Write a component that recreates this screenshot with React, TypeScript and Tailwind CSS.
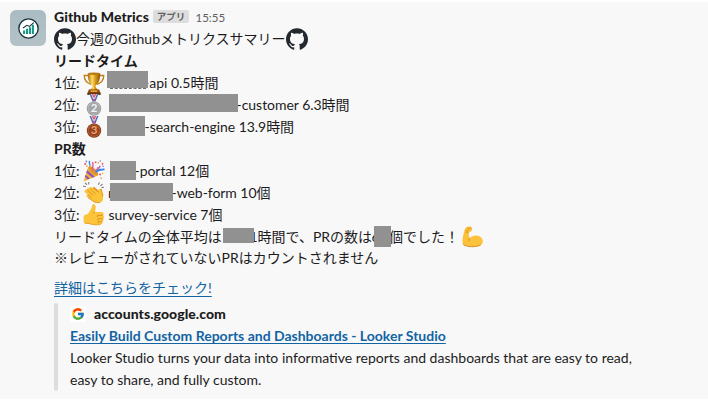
import type { ReactNode } from "react";
import { SiGithub } from "react-icons/si";
import { FcGoogle } from "react-icons/fc";

function Line({ children, h = "h-[22px]" }: { children: ReactNode; h?: string }) {
  return <div className={`flex items-center whitespace-pre ${h}`}>{children}</div>;
}

function Mask({ pos }: { pos: string }) {
  return <span className={`absolute bg-[#919191] ${pos}`} />;
}

function Rank({ n, icon, children }: { n: number; icon: ReactNode; children: ReactNode }) {
  return (
    <div className="relative flex h-[22px] items-center whitespace-pre">
      <span className="w-[29px]">{n}位:</span>
      <span className="h-[22px] w-[25px]">{icon}</span>
      {children}
    </div>
  );
}

function Trophy() {
  return (
    <svg width="22" height="23" viewBox="0 0 23 23" preserveAspectRatio="none" className="block">
      <defs>
        <linearGradient id="gold" x1="0" x2="1">
          <stop offset="0" stopColor="#a8660a" />
          <stop offset=".35" stopColor="#ffdf66" />
          <stop offset=".6" stopColor="#dc9a1c" />
          <stop offset="1" stopColor="#8d5208" />
        </linearGradient>
      </defs>
      <path d="M6 3.500H1.300C1.400 8 3.500 11 8.500 12.200M17 3.500h4.700C21.600 8 19.500 11 14.500 12.200" fill="none" stroke="#c07f14" strokeWidth="1.400" />
      <path d="M5 1.500h13c0 6-1.500 10-4.600 11.800L12.800 16h-2.600l-.6-2.700C6.500 11.500 5 7.500 5 1.500z" fill="url(#gold)" />
      <ellipse cx="11.500" cy="1.700" rx="6.500" ry="1.200" fill="#b97a16" />
      <path d="M10 15h3l2.500 3h-8z" fill="url(#gold)" />
      <path d="M6 17.500h11l1 3.500H5z" fill="#8a4b12" />
      <path d="M4.500 20.500h14V23h-14z" fill="#6d370c" />
      <path d="M8 18.300h7v1.700H8z" fill="#e6a72a" />
    </svg>
  );
}

function Medal({ n }: { n: 2 | 3 }) {
  const silver = n === 2;
  return (
    <svg width="22" height="22" viewBox="0 0 22 22" className="block">
      <path d="M6.500 0l3 7.500h3l3-7.500z" fill="#eceaf4" />
      <path d="M6.500 0h1.600l3 7.500H9.500zM15.500 0h-1.600l-3 7.500h1.600z" fill="#4a6fc4" />
      <path d="M9 0h1.300l2 6-.8 1.500zM13 0h-1.300l-2 6 .8 1.500z" fill="#d8455a" />
      <circle cx="11" cy="14.600" r="7.200" fill={silver ? "#8f9193" : "#783719"} />
      <circle cx="11" cy="14.400" r="6.500" fill={silver ? "#b4b6b8" : "#b45a2c"} />
      <circle cx="11" cy="14.400" r="5.300" fill={silver ? "#a2a4a7" : "#93431f"} />
      <text x="11" y="18.400" textAnchor="middle" fontSize="11.500" className="font-['Lato',sans-serif] font-bold" fill={silver ? "#f1f2f3" : "#f0a26e"}>{n}</text>
    </svg>
  );
}

function Party() {
  return (
    <svg width="22" height="22" viewBox="0 0 23 23" className="block">
      <path d="M.5 22.500L5.500 7c3 .5 9.500 6 10 9.300z" fill="#f3b72f" />
      <path d="M4.500 10.500l8 7-2.600 1-6.600-5.500zM2.800 15.500l4.500 3.900-2.400 1-3-2.500z" fill="#9556b5" />
      <ellipse cx="10.800" cy="11.300" rx="6.500" ry="2.600" transform="rotate(44 10.800 11.300)" fill="#e0942a" />
      <path d="M10 11C9.500 7 11.500 6 10 2M13 12c1-4 4-2 5-6" fill="none" stroke="#db5b9d" strokeWidth="1.500" />
      <path d="M13.500 13c2-4 4.500-2 9-3.500" fill="none" stroke="#3a82e8" strokeWidth="1.900" />
      <path d="M7 6C8 4 5.500 3 7 1" fill="none" stroke="#3a82e8" strokeWidth="1.500" />
      <g fill="#ef5d60">
        <path d="M1 4l2-1 .6 1.700-2 .6zM12 2l1.700-1 .6 2-1.700.5zM17 14l2 .4-.6 1.800-1.800-.5zM20 3l1.500.5-.7 1.700-1.500-.6z" />
      </g>
      <g fill="#f2a33a">
        <circle cx="4" cy="6.500" r=".9" /><circle cx="16" cy="3" r=".9" /><circle cx="20.500" cy="14" r=".8" /><circle cx="19" cy="19" r=".9" />
      </g>
      <g fill="#6e7ee0">
        <circle cx="3.500" cy="1.500" r=".9" /><circle cx="15.500" cy="8" r=".8" /><circle cx="18" cy="1" r=".8" /><circle cx="21" cy="6.500" r=".8" />
      </g>
    </svg>
  );
}

function Clap() {
  return (
    <svg width="22" height="22" viewBox="0 0 23 23" className="block">
      <g fill="none" stroke="#77777b" strokeWidth="1.100" strokeLinecap="round">
        <path d="M.5 4.500l2 .3M2.500 1.200l1.300 1.300M6 .5v1.500M17 .8l-.8 1.700M20 2.500l-1.400 1.400M21.500 5.500l-1.700.3" />
      </g>
      <path d="M10 6.500l1.500-1.500 6 5.200.3-3 1.500-.2 2 7.200-2 5.200z" fill="#dc951d" />
      <path d="M2 9c0-1.300 1.500-1.600 2.300-.9l.3-1.400c.7-1 1.700-.8 2.500 0 .2-1.600 1.900-1.700 2.800-.8l6.600 5.700-.5-3.300c.5-1.500 2.300-1.300 2.600.3l2.300 7.500c.7 2.500-.8 4.900-3.400 5.600-2.500.6-5.300-.1-7.200-1.500l-6-4.600c-1.400-1.100-.4-2.700.8-2.200L2.200 11c-.5-.6-.6-1.400-.2-2z" fill="#fbc338" />
      <path d="M4.300 8.100l6.300 5.800M7.100 6.700l6.100 5.700M4.900 13.200l4 2.900M5 16l5.500 4c2.500 1.600 5 2 7.200 1.200" fill="none" stroke="#d98c1c" strokeWidth=".8" />
    </svg>
  );
}

function Thumb() {
  return (
    <svg width="22" height="22" viewBox="0 0 22.500 23" className="block">
      <path d="M1 11.500c2.500-.2 4-1 5-3L8.800 4l.5-2.500C9.700-.2 12 0 12.700 1.800c.8 2.200.2 4.300-.6 6.500h7c2.300 0 2.900 2.500 1.600 3.500 1.500.9 1.300 2.900.1 3.600.9 1.100.4 2.700-.7 3.200.4 1.600-.4 2.700-2.100 2.900-4.500.6-8 .9-11.500-.5L1 20.200c-1-2.500-1-6 0-8.700z" fill="#fcc43a" />
      <path d="M20.500 11.900h-5c-1.300.1-1.300 1.400-.2 2M20.500 15.500h-4.700c-1.200.3-1.100 1.500 0 1.900M19.800 18.700h-4c-.8.2-.8 1 0 1.400M12.100 8.300c-1 .3-1.700.8-2 1.600" fill="none" stroke="#d78b1a" strokeWidth=".9" />
      <path d="M1.500 20l5 .5c3.500 1.300 7 1.600 11.500 1" fill="none" stroke="#df971f" strokeWidth=".8" />
    </svg>
  );
}

function Muscle() {
  return (
    <svg width="22" height="22" viewBox="0 0 22 22" className="block">
      <path d="M3.200 2.500C4 .8 7.500-.2 9 .8c1.500 1 1.300 3.300.2 4.500-.8.9-2 .8-2.500 1.700-.4 1.500.4 3.200 1 5 1.800-1.700 4.300-2.800 6.800-2.600 3.700.2 6.300 2.800 6.300 5.900 0 3.700-3.600 5.500-8.400 5.600C6.900 21 1.900 20.200.8 18.300-.3 14.500 1.400 7.500 3.200 2.500z" fill="#fcc23c" />
      <path d="M1.200 18.200c3 3.100 13.500 3.400 17.500.6M7.500 12c-.7 1.300-.6 2.300 0 3.300M3.500 4.200c1.500 1 2.300 1 3.200.3M5.700 1.500l.9 2M8 1.300l.3 1.900M6.600 7C5.200 7.100 4.300 6.500 3.800 5.700" fill="none" stroke="#d88c20" strokeWidth=".9" />
    </svg>
  );
}

export default function App() {
  return (
    <div className="h-[402px] w-[708px] overflow-hidden bg-white pt-[2px]">
      <main className="flex h-[397px] bg-[#f8f8f8] pl-[10px] pt-[8px] font-['Lato','Noto_Sans_CJK_JP',sans-serif] text-[14px] leading-[22px] text-[#1d1c1d]">
        <div className="grid h-[36px] w-[36px] shrink-0 place-items-center rounded-[6px] bg-gradient-to-b from-[#a9bcc2] to-[#b4c2c6]">
          <svg width="21" height="21" viewBox="0 0 20 20">
            <circle cx="10" cy="10" r="9.200" fill="#fff" stroke="#17323e" strokeWidth="1.300" />
            <path d="M4.800 11.800h2V15.300h-2zM7.600 10.200h2v5.100h-2zM10.400 8.800h2v6.500h-2zM13.200 6.500h2v8.800h-2z" fill="#159a87" />
            <path d="M4.800 9.500l3.700-2.500 2.500 1 4-3.500" fill="none" stroke="#17323e" strokeWidth="1" />
          </svg>
        </div>
        <div className="ml-[8px] w-[640px]">
          <header className="-mt-[3px] flex h-[21px] items-start whitespace-nowrap">
            <span className="-mt-[1px] w-[99px] text-[14px] font-black tracking-[0.07px]">Github Metrics</span>
            <span className="mt-[3px] flex h-[13px] w-[36px] items-center justify-center rounded-[2px] bg-[#dddddd] text-[9.500px] font-bold text-[#616061]">アプリ</span>
            <span className="ml-[6.500px] text-[11.500px] text-[#616061]">15:55</span>
          </header>
          <Line>
            <SiGithub className="h-[22px] w-[22px] text-[#24292f]" />
            <span className="w-[210px]">今週のGithubメトリクスサマリー</span>
            <SiGithub className="h-[22px] w-[22px] text-[#24292f]" />
          </Line>
          <Line><b className="font-bold">リードタイム</b></Line>
          <Rank n={1} icon={<Trophy />}>
            <span className="ml-[36px]">-api 0.5時間</span>
            <Mask pos="left-[53px] top-[-1px] h-[17px] w-[41px]" />
            <span className="absolute left-[56px] top-[15.500px] w-[36px] border-b border-dashed border-[#6b6b6b]" />
          </Rank>
          <Rank n={2} icon={<Medal n={2} />}>
            <span className="ml-[128.500px] tracking-[-0.03px]">-customer 6.3時間</span>
            <Mask pos="left-[55px] top-[0px] h-[18px] w-[129px]" />
          </Rank>
          <Rank n={3} icon={<Medal n={3} />}>
            <span className="ml-[36.500px] tracking-[-0.04px]">-search-engine 13.9時間</span>
            <Mask pos="left-[53px] top-[0px] h-[20px] w-[38px]" />
          </Rank>
          <Line><b className="font-bold">PR数</b></Line>
          <Rank n={1} icon={<Party />}>
            <span className="ml-[26.500px] tracking-[-0.05px]">-portal 12個</span>
            <Mask pos="left-[56px] top-[1px] h-[19px] w-[26px]" />
          </Rank>
          <Rank n={2} icon={<Clap />}>
            <span className="w-[63.500px]">r</span>
            <span className="tracking-[-0.05px]">-web-form 10個</span>
            <Mask pos="left-[56px] top-[1px] h-[18px] w-[63px]" />
          </Rank>
          <Rank n={3} icon={<Thumb />}>
            <span className="ml-[0.500px] tracking-[-0.03px]">survey-service 7個</span>
          </Rank>
          <Line>
            <span className="w-[168px]">リードタイムの全体平均は</span>
            <span className="relative w-[35.500px] text-right">1<Mask pos="left-[1px] top-[2px] h-[15px] w-[31px]" /></span>
            <span className="w-[114px]">時間で、PRの数は</span>
            <span className="relative w-[17.500px]">6<Mask pos="left-[2px] top-[0px] h-[21px] w-[17px]" /></span>
            <span className="w-[73px]">個でした！</span>
            <Muscle />
          </Line>
          <Line h="h-[20px]">※レビューがされていないPRはカウントされません</Line>
          <Line h="h-[22px] mt-[9px]">
            <a className="text-[#1264a3] underline underline-offset-[3px]">詳細はこちらをチェック!</a>
          </Line>
          <div className="mt-[4px] flex h-[88px]">
            <span className="w-[4px] shrink-0 rounded-[2px] bg-[#dddddd]" />
            <div className="ml-[12px] whitespace-nowrap">
              <div className="flex h-[22px] items-center">
                <span className="grid h-[16px] w-[16px] place-items-center rounded-[2px] bg-white"><FcGoogle className="h-[14px] w-[14px]" /></span>
                <span className="ml-[8px] font-black tracking-[0.05px]">accounts.google.com</span>
              </div>
              <a className="block h-[22px] font-bold text-[#1264a3] underline underline-offset-[2px]">Easily Build Custom Reports and Dashboards - Looker Studio</a>
              <p>Looker Studio turns your data into informative reports and dashboards that are easy to read,<br />easy to share, and fully custom.</p>
            </div>
          </div>
        </div>
      </main>
    </div>
  );
}
